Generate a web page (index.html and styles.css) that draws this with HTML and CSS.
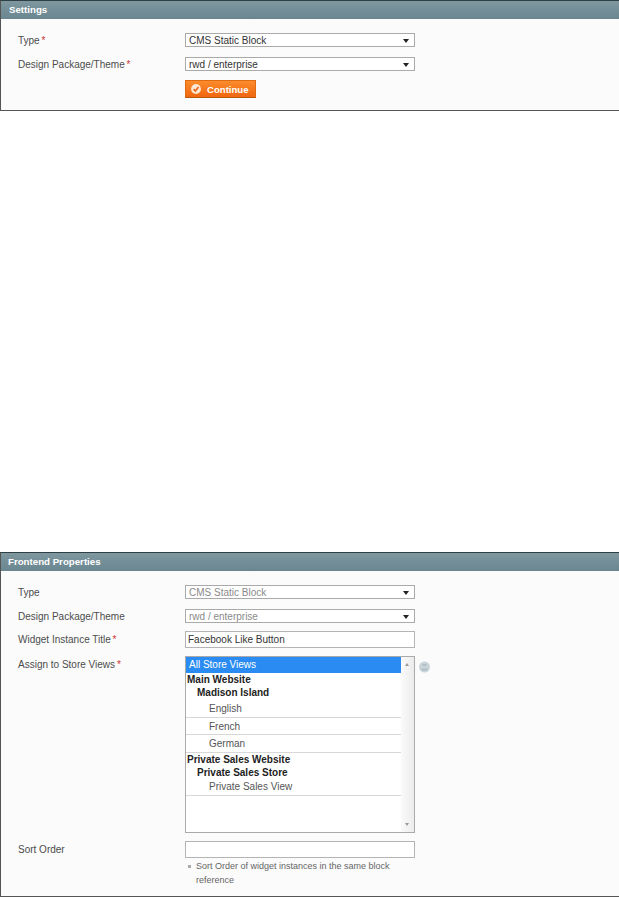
FILE: index.html
```html
<!DOCTYPE html>
<html lang="en">
<head>
<meta charset="utf-8">
<title>Widget settings</title>
<link rel="stylesheet" href="styles.css">
</head>
<body>
<section class="panel panel-settings">
  <h2 class="panel-title">Settings</h2>
  <div class="form form-settings">
    <div class="row row-select"><label class="label">Type <span class="req">*</span></label><div class="select"><span>CMS Static Block</span><i class="arrow"></i></div></div>
    <div class="row row-select"><label class="label">Design Package/Theme <span class="req">*</span></label><div class="select"><span>rwd / enterprise</span><i class="arrow"></i></div></div>
    <div class="row row-button"><span></span><button class="btn" type="button"><svg class="btn-icon" width="10" height="10" viewBox="0 0 11 11"><circle cx="5.5" cy="5.5" r="5.4" fill="#fde8d4"/><path d="M2.9 5.6 4.9 7.7 8.2 3.4" fill="none" stroke="#e8651a" stroke-width="1.8"/></svg>Continue</button></div>
  </div>
</section>
<section class="panel panel-frontend">
  <h2 class="panel-title">Frontend Properties</h2>
  <div class="form form-frontend">
    <div class="row row-select"><label class="label">Type</label><div class="select disabled"><span>CMS Static Block</span><i class="arrow"></i></div></div>
    <div class="row row-select tight"><label class="label">Design Package/Theme</label><div class="select disabled"><span>rwd / enterprise</span><i class="arrow"></i></div></div>
    <div class="row row-input"><label class="label">Widget Instance Title <span class="req">*</span></label><div class="input">Facebook Like Button</div></div>
    <div class="row row-list">
      <label class="label">Assign to Store Views <span class="req">*</span></label>
      <div class="list-wrap">
        <div class="list">
          <div class="options">
            <div class="opt selected">All Store Views</div>
            <div class="opt group top">Main Website</div>
            <div class="opt group sub">Madison Island</div>
            <div class="opt store line">English</div>
            <div class="opt store line">French</div>
            <div class="opt store line">German</div>
            <div class="opt group top">Private Sales Website</div>
            <div class="opt group sub">Private Sales Store</div>
            <div class="opt store line last">Private Sales View</div>
          </div>
          <div class="scrollbar"><i class="sb-up"></i><i class="sb-down"></i></div>
        </div>
        <svg class="help" width="13" height="14" viewBox="0 0 13 14"><circle cx="6.5" cy="7" r="5.5" fill="#c9d4d9"/><path d="M3.5 9.5h6M4.5 5h4" stroke="#a9b9c1" stroke-width="1.6"/></svg>
      </div>
    </div>
    <div class="row row-sort">
      <label class="label">Sort Order</label>
      <div>
        <div class="input"></div>
        <p class="note">Sort Order of widget instances in the same block reference</p>
      </div>
    </div>
  </div>
</section>
</body>
</html>
```
FILE: styles.css
```css
* { box-sizing: border-box; }
html, body { margin: 0; padding: 0; background: #fff; }
body { font-family: "Liberation Sans", Arial, sans-serif; font-size: 10px; color: #444; height: 897px; overflow: hidden; }

.panel { border: 1px solid #555; border-top-color: #2f3f46; border-right: 0; background: #fbfbfb; }
.panel-settings { height: 111px; }
.panel-frontend { height: 345px; margin-top: 441px; }

.panel-title { margin: 0; height: 18px; padding: 1px 0 0 8px; background: linear-gradient(#7f979f, #698690); color: #fff; font-size: 9.7px; line-height: 15px; font-weight: bold; }
.panel-frontend .panel-title { height: 18px; padding: 1px 0 0 7px; }

.form { padding-left: 17px; }
.form-settings { padding-top: 14px; }
.form-frontend { padding-top: 14px; }

.row { display: grid; grid-template-columns: 167px 230px; align-items: start; }
.row-select { margin-bottom: 10px; height: 14px; }
.row-select.tight { margin-bottom: 8px; }
.row-button { height: 18px; margin-top: -1px; }
.row-input { height: 17px; margin-bottom: 8px; }
.row-list { height: 177px; margin-bottom: 8px; }

.label { display: block; line-height: 14px; margin-top: 1px; color: #4c4c4c; }
.row-input .label, .row-list .label, .row-sort .label { margin-top: 2px; }
.req { color: #c33; margin-left: -1px; }

.select { height: 14px; border: 1px solid #aaa; background: #fff; display: flex; align-items: center; justify-content: space-between; padding: 1px 5px 0 3px; line-height: 12px; color: #333; }
.select.disabled { color: #8a8a8a; }
.arrow { width: 0; height: 0; border-left: 3px solid transparent; border-right: 3px solid transparent; border-top: 4px solid #222; }

.input { height: 17px; border: 1px solid #b4b4b4; background: #fff; padding: 0 2px; font-size: 10px; line-height: 15px; color: #333; }

.btn { display: flex; align-items: center; gap: 6px; width: 71px; height: 18px; padding: 0 0 0 5px; border: 1px solid #e06a12; border-bottom-color: #b8560e; background: linear-gradient(#fb8c2c, #f0660f); color: #fff; font: bold 9.6px "Liberation Sans", Arial, sans-serif; }
.btn-icon { flex: none; }

.list-wrap { position: relative; }
.list { display: flex; justify-content: space-between; width: 230px; height: 177px; border: 1px solid #aaa; background: #fff; }
.options { width: 215px; }
.opt { padding-left: 1px; height: 14px; line-height: 14px; color: #222; }
.opt.selected { height: 16px; line-height: 16px; padding-left: 3px; background: #2a8cf2; color: #fff; }
.opt.group { font-weight: bold; color: #222; }
.opt.group.top { height: 13px; line-height: 13px; }
.opt.group.sub { padding-left: 11px; }
.opt.store { padding-left: 23px; color: #555; }
.opt.line { height: 17.5px; line-height: 17px; border-bottom: 1px solid #d8d8d8; }
.opt.line.last { height: 16px; line-height: 14px; }

.scrollbar { width: 13px; background: linear-gradient(90deg, #fafafa, #ececec); position: relative; }
.sb-up, .sb-down { position: absolute; left: 4px; width: 0; height: 0; border-left: 2px solid transparent; border-right: 2px solid transparent; }
.sb-up { top: 6px; border-bottom: 3px solid #999; }
.sb-down { bottom: 6px; border-top: 3px solid #999; }

.help { position: absolute; left: 233px; top: 4px; }

.note { margin: 1px 0 0; padding-left: 11px; width: 228px; font-size: 9px; line-height: 14px; color: #666; position: relative; }
.note::before { content: ""; position: absolute; left: 3px; top: 6px; width: 3px; height: 3px; background: #aaa; }
```
